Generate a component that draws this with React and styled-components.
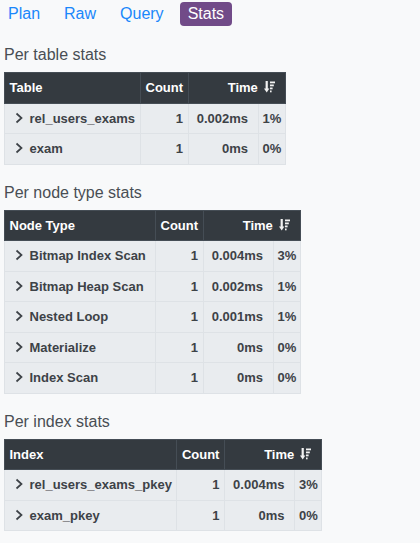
import React from 'react';
import styled, { createGlobalStyle } from 'styled-components';

const GlobalStyle = createGlobalStyle`
  html, body {
    margin: 0;
    padding: 0;
    background: #f8f9fa;
    font-family: "Liberation Sans", Arial, sans-serif;
  }
`;

const Page = styled.div`
  width: 420px;
  min-height: 543px;
  background: #f8f9fa;
`;

const Nav = styled.nav`
  display: flex;
  gap: 8px;
  padding: 2px 0 1px;
`;

const NavLink = styled.a`
  display: block;
  padding: 3px 8px;
  font-size: 16px;
  line-height: 18px;
  border-radius: 4px;
  text-decoration: none;
  cursor: pointer;
  color: ${(p) => (p.$active ? '#fff' : '#1a87fb')};
  background: ${(p) => (p.$active ? '#714b88' : 'transparent')};
`;

const Content = styled.div`
  padding: 0 4px;
`;

const SectionTitle = styled.h3`
  margin: 18px 0 8px;
  font-size: 16px;
  line-height: 19px;
  font-weight: 400;
  color: #484e54;
`;

const StatsTable = styled.table`
  border-collapse: collapse;
  font-size: 13px;
  font-weight: 700;
  line-height: 19.5px;
  white-space: nowrap;
`;

const HeadCell = styled.th`
  background: #343a40;
  color: #fff;
  border: 1px solid #454d55;
  padding: 5px ${(p) => (p.$right ? '10px' : '4.5px')} 5px 4.5px;
  text-align: ${(p) => (p.$right ? 'right' : 'left')};
  width: ${(p) => (p.$w ? `${p.$w}px` : 'auto')};
`;

const SortIcon = styled.svg`
  display: inline-block;
  margin-left: 6px;
  vertical-align: -1px;
`;

const Cell = styled.td`
  background: #e9ecef;
  color: #3d4247;
  border: 1px solid #dee2e6;
  padding: 5px ${(p) => (p.$time ? '10px' : p.$pct ? '3.5px' : '4.5px')} 5px
    ${(p) => (p.$pct ? '3.5px' : '4.5px')};
  text-align: ${(p) => (p.$right ? 'right' : 'left')};
  min-width: ${(p) => (p.$time ? '55px' : '0')};
`;

const Chevron = styled.svg`
  display: inline-block;
  width: 18px;
  height: 12px;
  margin-right: 2px;
  vertical-align: -1px;
`;

const SortAmountDown = () => (
  <SortIcon width="11" height="12" viewBox="0 0 11 12">
    <rect x="1.6" y="0" width="2.2" height="8" fill="#f2f2f2" />
    <polygon points="0,7.5 5.4,7.5 2.7,11.5" fill="#f2f2f2" />
    <rect x="6" y="0.5" width="5" height="1.8" fill="#f2f2f2" />
    <rect x="6" y="3.5" width="3.8" height="1.8" fill="#f2f2f2" />
    <rect x="6" y="6.5" width="2.6" height="1.8" fill="#f2f2f2" />
    <rect x="6" y="9.5" width="1.6" height="1.8" fill="#f2f2f2" />
  </SortIcon>
);

const RowChevron = () => (
  <Chevron viewBox="0 0 18 12">
    <polyline
      points="6.5,1.5 11.5,6 6.5,10.5"
      fill="none"
      stroke="#3d4247"
      strokeWidth="1.7"
    />
  </Chevron>
);

const tables = [
  {
    title: 'Per table stats',
    label: 'Table',
    width: 126,
    rows: [
      ['rel_users_exams', 1, '0.002ms', '1%'],
      ['exam', 1, '0ms', '0%'],
    ],
  },
  {
    title: 'Per node type stats',
    label: 'Node Type',
    width: 141,
    rows: [
      ['Bitmap Index Scan', 1, '0.004ms', '3%'],
      ['Bitmap Heap Scan', 1, '0.002ms', '1%'],
      ['Nested Loop', 1, '0.001ms', '1%'],
      ['Materialize', 1, '0ms', '0%'],
      ['Index Scan', 1, '0ms', '0%'],
    ],
  },
  {
    title: 'Per index stats',
    label: 'Index',
    width: 162,
    rows: [
      ['rel_users_exams_pkey', 1, '0.004ms', '3%'],
      ['exam_pkey', 1, '0ms', '0%'],
    ],
  },
];

const StatsSection = ({ title, label, width, rows }) => (
  <section>
    <SectionTitle>{title}</SectionTitle>
    <StatsTable>
      <thead>
        <tr>
          <HeadCell $w={width}>{label}</HeadCell>
          <HeadCell>Count</HeadCell>
          <HeadCell colSpan={2} $right>
            Time
            <SortAmountDown />
          </HeadCell>
        </tr>
      </thead>
      <tbody>
        {rows.map(([name, count, time, pct]) => (
          <tr key={name}>
            <Cell>
              <RowChevron />
              {name}
            </Cell>
            <Cell $right>{count}</Cell>
            <Cell $right $time>{time}</Cell>
            <Cell $right $pct>{pct}</Cell>
          </tr>
        ))}
      </tbody>
    </StatsTable>
  </section>
);

const App = () => {
  return (
    <Page>
      <GlobalStyle />
      <Nav>
        <NavLink>Plan</NavLink>
        <NavLink>Raw</NavLink>
        <NavLink>Query</NavLink>
        <NavLink $active>Stats</NavLink>
      </Nav>
      <Content>
        {tables.map((t) => (
          <StatsSection key={t.title} {...t} />
        ))}
      </Content>
    </Page>
  );
};

export default App;
